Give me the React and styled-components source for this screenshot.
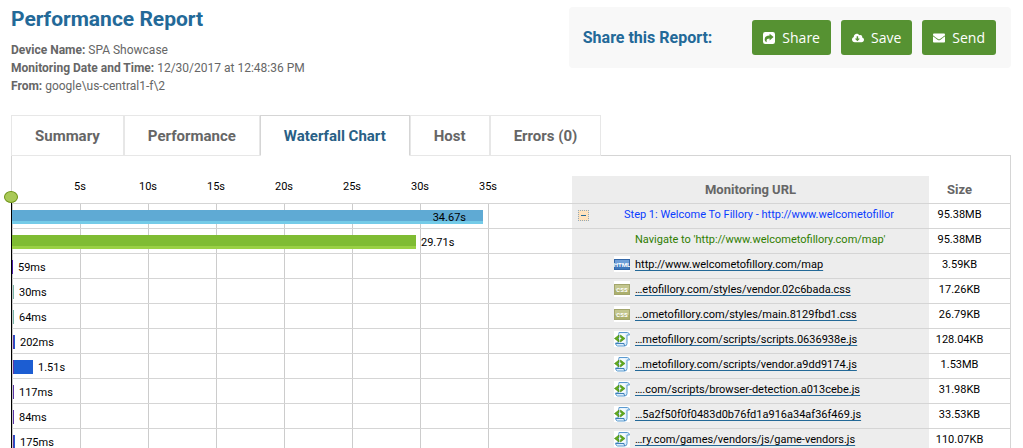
import React from "react"
import styled, { createGlobalStyle } from "styled-components"
import { FaCloudDownloadAlt, FaEnvelope } from "react-icons/fa"

const GlobalStyle = createGlobalStyle`
  body {
    margin: 0;
    background: #fff;
    color: #666;
    font-family: Roboto, "Liberation Sans", sans-serif;
    font-size: 12px;
    overflow: hidden;
  }
`

const PX_PER_SECOND = 13.6

const Page = styled.div`
  padding: 7px 12px 0 11px;
`

const Header = styled.header`
  display: flex;
  justify-content: space-between;
  align-items: flex-start;
  min-height: 108px;
`

const Heading = styled.h1`
  margin: 0 0 10px;
  font-size: 21px;
  line-height: 24px;
  font-weight: 700;
  color: #236998;
`

const Para = styled.p`
  margin: 0;
  line-height: 18px;
`

const ShareBox = styled.section`
  display: flex;
  align-items: center;
  gap: 10px;
  box-sizing: border-box;
  height: 61px;
  padding: 0 15px 0 14px;
  background: #f8f8f8;
  border-radius: 4px;
`

const ShareTitle = styled.h2`
  margin: 0 30px 0 0;
  font-size: 16px;
  color: #236998;
`

const Button = styled.button`
  display: flex;
  align-items: center;
  gap: 7px;
  height: 35px;
  padding: 0 11px;
  border: 0;
  border-radius: 3px;
  background: #569232;
  color: #fff;
  font-family: "Open Sans", sans-serif;
  font-size: 14px;

  svg {
    width: 12px;
    height: 12px;
  }
`

const Tabs = styled.nav`
  display: flex;
  margin-bottom: -1px;
`

const Tab = styled.button`
  height: 41px;
  padding: 0 23px;
  border: 1px solid;
  border-color: ${(p) => (p.$active ? "#d5d5d5 #d5d5d5 #fff" : "#e7e7e7")};
  background: #fff;
  color: ${(p) => (p.$active ? "#285f86" : "#666")};
  font-family: inherit;
  font-size: 15px;
  font-weight: 700;
`

const Panel = styled.main`
  border: 1px solid #d5d5d5;
  padding-top: 20px;
`

const Table = styled.table`
  width: 100%;
  table-layout: fixed;
  border-collapse: collapse;
  color: #000;
  font-size: 11px;
`

const HeadCell = styled.th`
  width: ${(p) => p.$width};
  height: 27px;
  padding: 0;
  background: ${(p) => (p.$shaded ? "#ededed" : "#fff")};
  color: #666;
  font-size: 13px;
  padding-right: ${(p) => (p.$inset ? "20px" : "0")};
`

const Scale = styled.div`
  display: flex;
  padding: 0 0 7px 34px;
  color: #000;
  font-size: 11px;
  font-weight: 400;
`

const Tick = styled.span`
  width: 68px;
  text-align: center;
`

const ChartHead = styled.th`
  position: relative;
  padding: 0;
`

/* handle sitting on top of the time cursor */
const Marker = styled.span`
  position: absolute;
  left: -8px;
  bottom: 0;
  box-sizing: border-box;
  width: 14px;
  height: 12px;
  border: 1px solid #6f9417;
  border-radius: 50%;
  background: #a9c957;
`

const Row = styled.tr`
  height: 25px;
`

/* one grid line every 5s, the last one at 35s */
const ChartCell = styled.td`
  position: relative;
  padding: 0;
  border-top: 1px solid #d5d5d5;
  background: repeating-linear-gradient(
      to right,
      #ccc 0,
      #ccc 1px,
      transparent 1px,
      transparent 68px
    )
    0 0 / 477px 100% no-repeat;

  &::before {
    content: "";
    position: absolute;
    top: -1px;
    bottom: 0;
    left: -1px;
    width: 1px;
    background: #000;
  }
`

const BarLine = styled.div`
  display: flex;
  align-items: center;
  gap: 5px;
  height: 14px;
  padding: 2px 0 0 ${(p) => (p.$nested ? "1px" : "0")};
`

const Bar = styled.div`
  display: flex;
  align-items: center;
  justify-content: flex-end;
  box-sizing: border-box;
  height: 14px;
  padding-right: ${(p) => (p.$inside ? "17px" : "0")};
  background: ${(p) => p.$fill};
`

const UrlCell = styled.td`
  padding: 0;
  border-top: 1px solid #d5d5d5;
  background: #ededed;
`

const UrlLine = styled.div`
  display: flex;
  align-items: center;
  height: 20px;
  padding: 0 34px 4px 6px;
`

const Toggle = styled.button`
  display: grid;
  place-items: center;
  flex: none;
  box-sizing: border-box;
  width: 11px;
  height: 11px;
  margin: 3px 35px 0 0;
  padding: 0;
  border: 1px dotted #8fa9bd;
  background: #ffe2bd;

  &::before {
    content: "";
    width: 5px;
    height: 1px;
    background: #236998;
  }
`

const StepText = styled.span`
  overflow: hidden;
  white-space: nowrap;
  color: #0a3cff;
`

const NavText = styled.span`
  margin-left: 57px;
  color: #2f7d00;
`

const FileIcon = styled.span`
  display: flex;
  width: 16px;
  height: 16px;
  margin: 0 5px 0 36px;
  background: #fff;
`

const Link = styled.a`
  color: #000;
  white-space: nowrap;
  text-decoration: underline #236998 1px;
  text-decoration-skip-ink: none;
  text-underline-offset: 2px;
`

const SizeCell = styled.td`
  padding: 0 20px 4px 0;
  border-top: 1px solid #d5d5d5;
  text-align: center;
`

const ShareIcon = () => (
  <svg viewBox="0 0 12 12" aria-hidden="true">
    <path
      fill="currentColor"
      fillRule="evenodd"
      d="M2.2 0h7.6A2.2 2.2 0 0 1 12 2.2v7.6A2.2 2.2 0 0 1 9.8 12H2.2A2.2 2.2 0 0 1 0 9.8V2.2A2.2 2.2 0 0 1 2.2 0zM6.6 1.7v1.8C3.5 3.5 1.7 4.8 1.7 7.2c0 1.3.6 2.2 1.5 2.9.3.2.6 0 .5-.4C3.2 7.7 4.2 6.6 6.6 6.6v1.900L10.600 5z"
    />
  </svg>
)

const TagIcon = ({ label, fontSize, top, bottom, edge }) => (
  <svg width="16" height="16" viewBox="0 0 16 16" aria-hidden="true">
    <rect x="0" y="3" width="16" height="11" fill={edge} />
    <rect x="1" y="4" width="14" height="5" fill={top} />
    <rect x="1" y="9" width="14" height="4" fill={bottom} />
    <text
      x="8"
      y="11"
      textAnchor="middle"
      fill="#fff"
      fontFamily="Roboto, sans-serif"
      fontSize={fontSize}
      fontWeight="700"
    >
      {label}
    </text>
  </svg>
)

const ScriptIcon = () => (
  <svg width="16" height="16" viewBox="0 0 16 16" aria-hidden="true">
    <path
      d="M5 1.5h8.500q1.500 0 2 2.500h-2.500v8.500q0 2.500-2.500 2.500H3.500q-2-.5-2-3h2.500z"
      fill="#dceefb"
      stroke="#5b9bd0"
    />
    <path d="M5.500 2.500h6v9h-6z" fill="#f6fbff" />
    <path d="M2 12.500h8q0 2 1 2.500" fill="none" stroke="#3f7fb8" />
    <path
      d="M5 4 0.500 7.500 5 11V8.800L3.700 7.500 5 6.200zM6.500 4 11 7.500 6.500 11V8.800L7.800 7.500 6.500 6.200z"
      fill="#62ac1c"
      stroke="#468a12"
      strokeWidth="0.6"
    />
  </svg>
)

const icons = {
  html: <TagIcon label="HTML" fontSize="6" top="#6f9fd8" bottom="#3f78bd" edge="#3468a8" />,
  css: <TagIcon label="CSS" fontSize="6" top="#c3c68e" bottom="#acb06d" edge="#a3a66d" />,
  js: <ScriptIcon />,
}

const tabs = ["Summary", "Performance", "Waterfall Chart", "Host", "Errors (0)"]
const ticks = ["5s", "10s", "15s", "20s", "25s", "30s", "35s"]

const BLUE_BAR = "linear-gradient(#5faad4 80%, #74cbe8 80%)"
const GREEN_BAR = "linear-gradient(#7fbc33 80%, #9ad145 80%)"
const SCRIPT_BAR = "linear-gradient(to right, #5b35a8 1px, #1c5dd2 1px)"

const rows = [
  { time: "34.67s", seconds: 34.67, fill: BLUE_BAR, inside: true, kind: "step", text: "Step 1: Welcome To Fillory - http://www.welcometofillor", size: "95.38MB" },
  { time: "29.71s", seconds: 29.71, fill: GREEN_BAR, kind: "nav", text: "Navigate to 'http://www.welcometofillory.com/map'", size: "95.38MB" },
  { time: "59ms", seconds: 0.059, fill: "#4b1fa5", kind: "html", text: "http://www.welcometofillory.com/map", size: "3.59KB" },
  { time: "30ms", seconds: 0.03, fill: "#7ab5a8", kind: "css", text: "…etofillory.com/styles/vendor.02c6bada.css", size: "17.26KB" },
  { time: "64ms", seconds: 0.064, fill: "#7ab5a8", kind: "css", text: "…ometofillory.com/styles/main.8129fbd1.css", size: "26.79KB" },
  { time: "202ms", seconds: 0.202, fill: SCRIPT_BAR, kind: "js", text: "…metofillory.com/scripts/scripts.0636938e.js", size: "128.04KB" },
  { time: "1.51s", seconds: 1.51, fill: SCRIPT_BAR, kind: "js", text: "…metofillory.com/scripts/vendor.a9dd9174.js", size: "1.53MB" },
  { time: "117ms", seconds: 0.117, fill: "#5b35a8", kind: "js", text: "….com/scripts/browser-detection.a013cebe.js", size: "31.98KB" },
  { time: "84ms", seconds: 0.084, fill: "#5b35a8", kind: "js", text: "…5a2f50f0f0483d0b76fd1a916a34af36f469.js", size: "33.53KB" },
  { time: "175ms", seconds: 0.175, fill: SCRIPT_BAR, kind: "js", text: "…ry.com/games/vendors/js/game-vendors.js", size: "110.07KB" },
]

const Url = ({ kind, text }) => {
  if (kind === "step") {
    return (
      <UrlLine>
        <Toggle aria-label="Collapse step" />
        <StepText>{text}</StepText>
      </UrlLine>
    )
  }
  if (kind === "nav") {
    return (
      <UrlLine>
        <NavText>{text}</NavText>
      </UrlLine>
    )
  }
  return (
    <UrlLine>
      <FileIcon>{icons[kind]}</FileIcon>
      <Link href="#">{text}</Link>
    </UrlLine>
  )
}

const App = () => (
  <>
    <GlobalStyle />
    <Page>
      <Header>
        <div>
          <Heading>Performance Report</Heading>
          <Para><b>Device Name:</b> SPA Showcase</Para>
          <Para><b>Monitoring Date and Time:</b> 12/30/2017 at 12:48:36 PM</Para>
          <Para><b>From:</b> google\us-central1-f\2</Para>
        </div>
        <ShareBox>
          <ShareTitle>Share this Report:</ShareTitle>
          <Button><ShareIcon />Share</Button>
          <Button><FaCloudDownloadAlt />Save</Button>
          <Button><FaEnvelope />Send</Button>
        </ShareBox>
      </Header>
      <Tabs>
        {tabs.map((name) => (
          <Tab key={name} $active={name === "Waterfall Chart"}>
            {name}
          </Tab>
        ))}
      </Tabs>
      <Panel>
        <Table>
          <thead>
            <tr>
              <ChartHead>
                <Scale>
                  {ticks.map((t) => (
                    <Tick key={t}>{t}</Tick>
                  ))}
                </Scale>
                <Marker />
              </ChartHead>
              <HeadCell $width="357px" $shaded>Monitoring URL</HeadCell>
              <HeadCell $width="61px" $inset>Size</HeadCell>
            </tr>
          </thead>
          <tbody>
            {rows.map((row) => (
              <Row key={row.text}>
                <ChartCell>
                  <BarLine $nested={row.kind === "css" || row.kind === "js"}>
                    <Bar
                      $fill={row.fill}
                      $inside={row.inside}
                      style={{ width: Math.max(1, Math.floor(row.seconds * PX_PER_SECOND)) }}
                    >
                      {row.inside && row.time}
                    </Bar>
                    {!row.inside && <span>{row.time}</span>}
                  </BarLine>
                </ChartCell>
                <UrlCell>
                  <Url kind={row.kind} text={row.text} />
                </UrlCell>
                <SizeCell>{row.size}</SizeCell>
              </Row>
            ))}
          </tbody>
        </Table>
      </Panel>
    </Page>
  </>
)

export default App
